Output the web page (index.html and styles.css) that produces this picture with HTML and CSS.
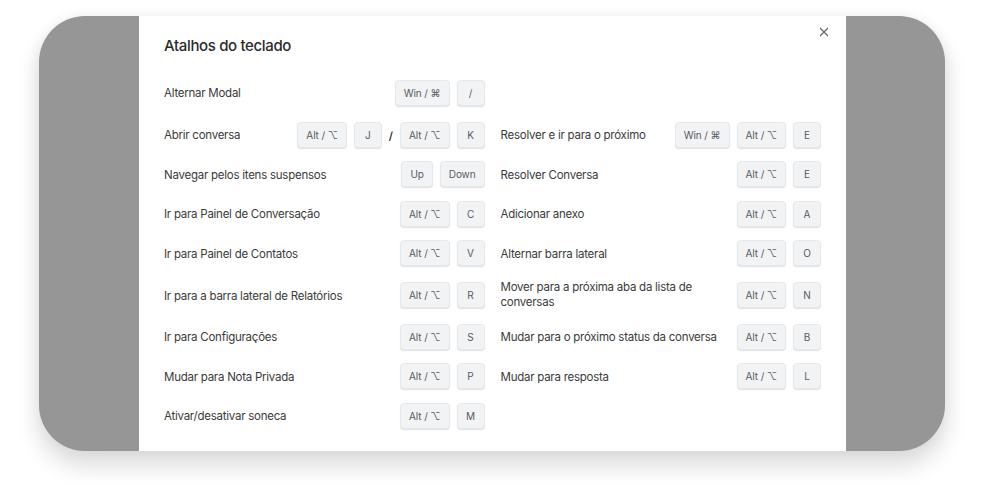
FILE: index.html
```html
<!DOCTYPE html>
<html lang="pt">
<head>
<meta charset="utf-8">
<title>Atalhos do teclado</title>
<link rel="stylesheet" href="styles.css">
</head>
<body>
<div class="stage">
  <div class="frame">
    <div class="modal">
      <button class="close" aria-label="Fechar">
        <svg width="10" height="10" viewBox="0 0 10 10"><path d="M1 1 L9 9 M9 1 L1 9" stroke="#666" stroke-width="1.2" fill="none"/></svg>
      </button>
      <h1 class="title">Atalhos do teclado</h1>
      <div class="grid">
        <div class="row first"><span class="label">Alternar Modal</span><span class="keys"><kbd>Win / ⌘</kbd><kbd>/</kbd></span></div>
        <div class="row first"></div>

        <div class="row"><span class="label">Abrir conversa</span><span class="keys"><kbd>Alt / ⌥</kbd><kbd>J</kbd><span class="sep">/</span><kbd>Alt / ⌥</kbd><kbd>K</kbd></span></div>
        <div class="row"><span class="label">Resolver e ir para o próximo</span><span class="keys"><kbd>Win / ⌘</kbd><kbd>Alt / ⌥</kbd><kbd>E</kbd></span></div>

        <div class="row"><span class="label">Navegar pelos itens suspensos</span><span class="keys"><kbd>Up</kbd><kbd>Down</kbd></span></div>
        <div class="row"><span class="label">Resolver Conversa</span><span class="keys"><kbd>Alt / ⌥</kbd><kbd>E</kbd></span></div>

        <div class="row"><span class="label">Ir para Painel de Conversação</span><span class="keys"><kbd>Alt / ⌥</kbd><kbd>C</kbd></span></div>
        <div class="row"><span class="label">Adicionar anexo</span><span class="keys"><kbd>Alt / ⌥</kbd><kbd>A</kbd></span></div>

        <div class="row"><span class="label">Ir para Painel de Contatos</span><span class="keys"><kbd>Alt / ⌥</kbd><kbd>V</kbd></span></div>
        <div class="row"><span class="label">Alternar barra lateral</span><span class="keys"><kbd>Alt / ⌥</kbd><kbd>O</kbd></span></div>

        <div class="row"><span class="label">Ir para a barra lateral de Relatórios</span><span class="keys"><kbd>Alt / ⌥</kbd><kbd>R</kbd></span></div>
        <div class="row"><span class="label narrow">Mover para a próxima aba da lista de conversas</span><span class="keys"><kbd>Alt / ⌥</kbd><kbd>N</kbd></span></div>

        <div class="row"><span class="label">Ir para Configurações</span><span class="keys"><kbd>Alt / ⌥</kbd><kbd>S</kbd></span></div>
        <div class="row"><span class="label">Mudar para o próximo status da conversa</span><span class="keys"><kbd>Alt / ⌥</kbd><kbd>B</kbd></span></div>

        <div class="row"><span class="label">Mudar para Nota Privada</span><span class="keys"><kbd>Alt / ⌥</kbd><kbd>P</kbd></span></div>
        <div class="row"><span class="label">Mudar para resposta</span><span class="keys"><kbd>Alt / ⌥</kbd><kbd>L</kbd></span></div>

        <div class="row"><span class="label">Ativar/desativar soneca</span><span class="keys"><kbd>Alt / ⌥</kbd><kbd>M</kbd></span></div>
      </div>
    </div>
  </div>
</div>
</body>
</html>
```

FILE: styles.css
```css
* { box-sizing: border-box; }
html, body { margin: 0; padding: 0; background: #ffffff; }
body {
  width: 989px;
  height: 497px;
  overflow: hidden;
  font-family: Inter, "Noto Sans", "DejaVu Sans", sans-serif;
  color: #3a3a3a;
}
.stage {
  padding: 16px 44px 0 39px;
}
.frame {
  width: 906px;
  height: 435px;
  background: #969696;
  border-radius: 46px;
  overflow: hidden;
  box-shadow: 0 14px 22px 2px rgba(0, 0, 0, 0.13), 0 0 14px rgba(0, 0, 0, 0.05);
  display: flex;
  padding-left: 100px;
}
.modal {
  position: relative;
  width: 707px;
  height: 100%;
  background: #ffffff;
  padding: 20px 25px 0 25px;
}
.close {
  position: absolute;
  top: 11px;
  right: 17px;
  border: 0;
  background: none;
  padding: 0;
  width: 10px;
  height: 10px;
  display: flex;
}
.title {
  margin: 0 0 17px 0;
  font-size: 15px;
  font-weight: 500;
  line-height: 20px;
  letter-spacing: -0.35px;
  color: #2b2b2b;
}
.grid {
  display: grid;
  grid-template-columns: 1fr 1fr;
  column-gap: 16px;
}
.row {
  display: flex;
  align-items: center;
  justify-content: space-between;
  min-height: 39.5px;
  padding: 6px 0;
}
.row.first { margin-bottom: 2.5px; }
.label {
  font-size: 11.5px;
  line-height: 15px;
  letter-spacing: -0.25px;
  color: #3a3a3a;
  padding-top: 2px;
}
.label.narrow { max-width: 215px; padding: 1px 0; }
.keys {
  display: flex;
  align-items: center;
  gap: 7px;
  flex-shrink: 0;
}
kbd {
  display: inline-flex;
  align-items: center;
  justify-content: center;
  min-width: 28px;
  height: 26px;
  padding: 0 8px;
  background: #f2f3f5;
  border: 1px solid #e6e8eb;
  border-radius: 4px;
  box-shadow: 0 1px 1px rgba(0, 0, 0, 0.12);
  font-family: Inter, "DejaVu Sans", sans-serif;
  font-size: 10px;
  color: #555b62;
  letter-spacing: -0.1px;
}
.sep {
  font-size: 11px;
  font-weight: 600;
  color: #333;
  margin-top: 3px;
}
```
